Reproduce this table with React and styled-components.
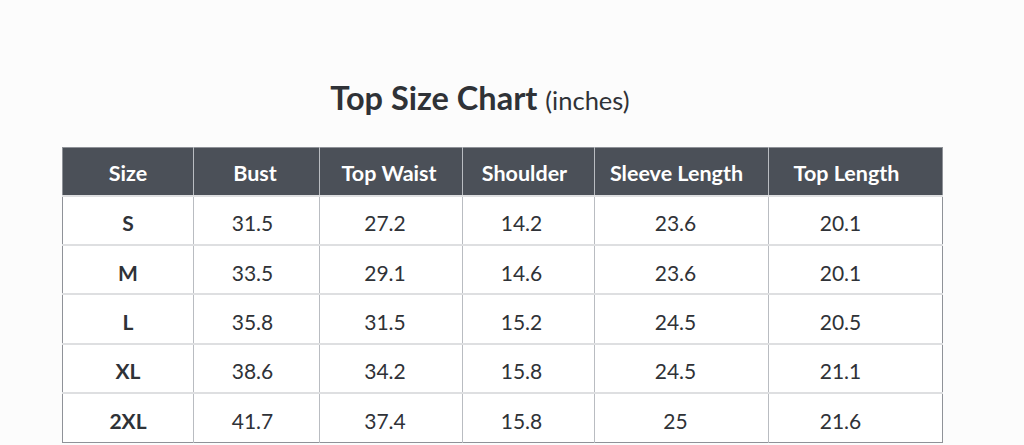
import React from "react";
import styled, { createGlobalStyle } from "styled-components";

const Global = createGlobalStyle`
  html, body { margin: 0; padding: 0; background: #fcfcfc; }
  body { font-family: Lato, "Open Sans", sans-serif; color: #2f3237; }
`;

const Page = styled.div`
  width: 1024px;
  height: 445px;
  overflow: hidden;
  display: flex;
  flex-direction: column;
  align-items: flex-start;
  padding: 76px 0 0 62px;
  box-sizing: border-box;
`;

const Title = styled.h1`
  margin: 0 0 25px 0;
  width: 880px;
  padding-right: 44px;
  box-sizing: border-box;
  text-align: center;
  font-size: 32.5px;
  font-weight: 700;
  line-height: 44px;
  color: #2f3237;
`;

const Unit = styled.span`
  font-size: 25.5px;
  font-weight: 400;
`;

const Table = styled.table`
  border-collapse: collapse;
  width: 880px;
  table-layout: fixed;
  border: 1.5px solid #8f9298;
  background: #fff;
`;

const HeadCell = styled.th`
  background: #4b5058;
  color: #fff;
  height: 48px;
  padding: 4px ${(p) => p.$shift}px 0 0;
  box-sizing: border-box;
  font-size: 21.5px;
  font-weight: 700;
  text-align: center;
  border-left: 1.5px solid #b9bcc1;
  &:first-child { border-left: none; }
`;

const Cell = styled.td`
  height: 49.4px;
  padding: 5px ${(p) => p.$shift}px 0 0;
  box-sizing: border-box;
  text-align: center;
  font-size: 21px;
  font-weight: ${(p) => (p.$bold ? 700 : 400)};
  color: #2f3237;
  border-top: 2px solid #dedfe1;
  border-left: 1.5px solid #b9bcc1;
  &:first-child { border-left: none; }
`;

const widths = [131, 126, 143, 132, 174, 174];
const headShift = [0, 3, 4, 8, 10, 18];
const cellShift = [0, 8, 12, 14, 12, 30];
const headers = ["Size", "Bust", "Top Waist", "Shoulder", "Sleeve Length", "Top Length"];
const rows = [
  ["S", "31.5", "27.2", "14.2", "23.6", "20.1"],
  ["M", "33.5", "29.1", "14.6", "23.6", "20.1"],
  ["L", "35.8", "31.5", "15.2", "24.5", "20.5"],
  ["XL", "38.6", "34.2", "15.8", "24.5", "21.1"],
  ["2XL", "41.7", "37.4", "15.8", "25", "21.6"],
];

export default function App() {
  return (
    <>
      <Global />
      <Page>
        <Title>
          Top Size Chart <Unit>(inches)</Unit>
        </Title>
        <Table>
          <colgroup>
            {widths.map((w, i) => (
              <col key={i} style={{ width: w }} />
            ))}
          </colgroup>
          <thead>
            <tr>
              {headers.map((h, i) => (
                <HeadCell key={h} $shift={headShift[i]}>
                  {h}
                </HeadCell>
              ))}
            </tr>
          </thead>
          <tbody>
            {rows.map((r) => (
              <tr key={r[0]}>
                {r.map((v, i) => (
                  <Cell key={i} $bold={i === 0} $shift={cellShift[i]}>
                    {v}
                  </Cell>
                ))}
              </tr>
            ))}
          </tbody>
        </Table>
      </Page>
    </>
  );
}
